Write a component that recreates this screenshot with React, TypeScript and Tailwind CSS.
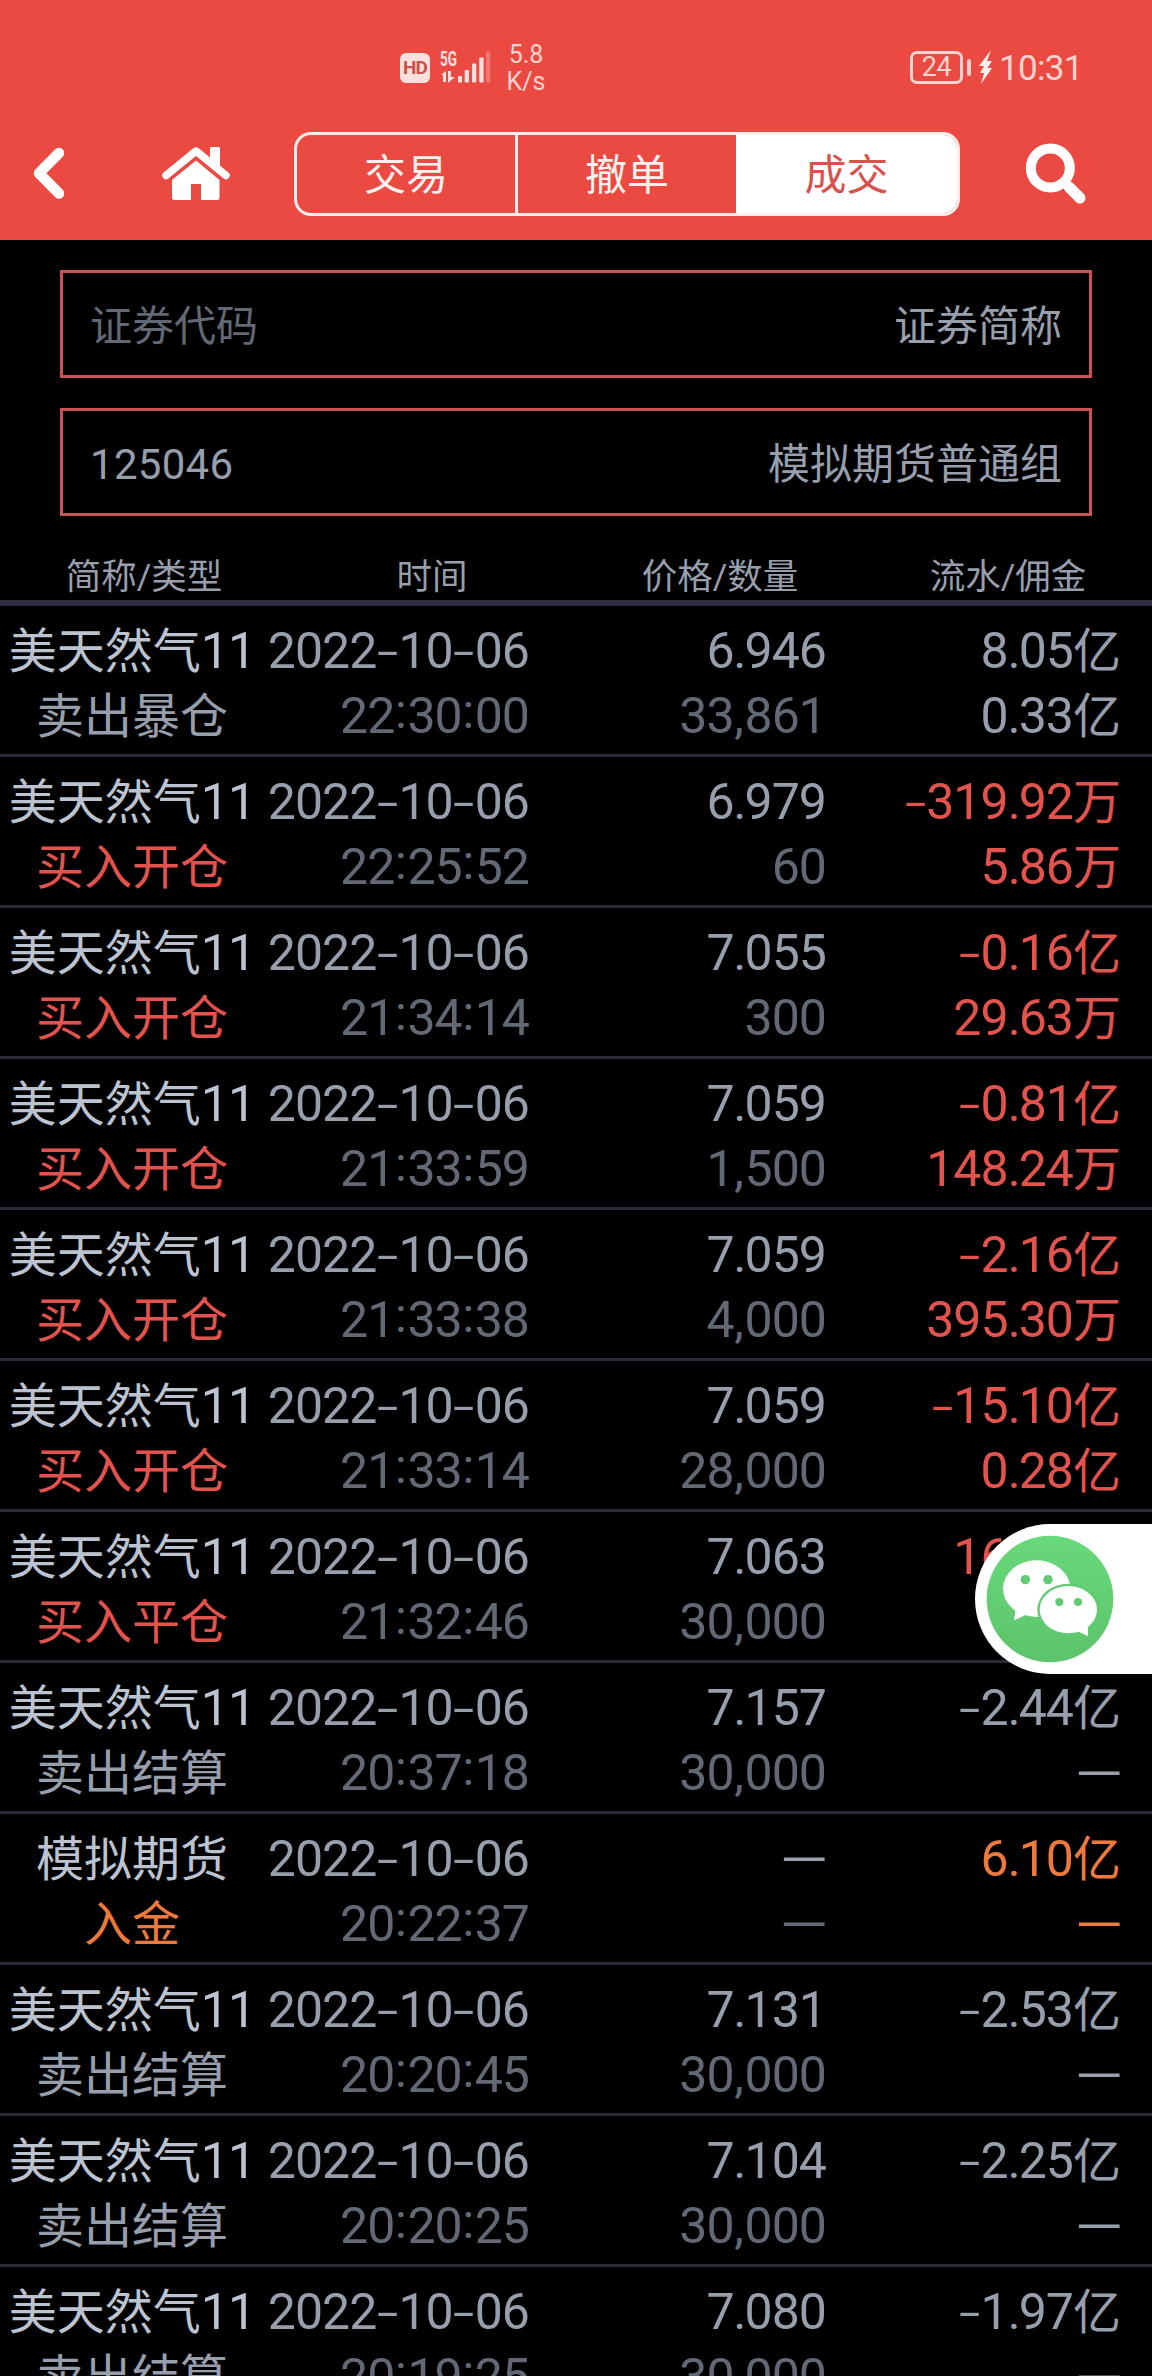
import clsx from 'clsx';

type Tone = 'muted' | 'normal' | 'red' | 'orange';

interface Trade {
  name: string;
  type: string;
  time: string;
  price: string;
  amount: string;
  flow: string;
  fee: string;
  typeTone: Tone;
  flowTone: Tone;
}

const toneClasses: Record<Tone, string> = {
  muted: 'text-[#626975]',
  normal: 'text-[#979eac]',
  red: 'text-[#e2534e]',
  orange: 'text-[#ec7a3f]',
};

const GAS = '美天然气11';

const trades: Trade[] = [
  { name: GAS, type: '卖出暴仓', time: '22:30:00', price: '6.946', amount: '33,861', flow: '8.05亿', fee: '0.33亿', typeTone: 'normal', flowTone: 'normal' },
  { name: GAS, type: '买入开仓', time: '22:25:52', price: '6.979', amount: '60', flow: '-319.92万', fee: '5.86万', typeTone: 'red', flowTone: 'red' },
  { name: GAS, type: '买入开仓', time: '21:34:14', price: '7.055', amount: '300', flow: '-0.16亿', fee: '29.63万', typeTone: 'red', flowTone: 'red' },
  { name: GAS, type: '买入开仓', time: '21:33:59', price: '7.059', amount: '1,500', flow: '-0.81亿', fee: '148.24万', typeTone: 'red', flowTone: 'red' },
  { name: GAS, type: '买入开仓', time: '21:33:38', price: '7.059', amount: '4,000', flow: '-2.16亿', fee: '395.30万', typeTone: 'red', flowTone: 'red' },
  { name: GAS, type: '买入开仓', time: '21:33:14', price: '7.059', amount: '28,000', flow: '-15.10亿', fee: '0.28亿', typeTone: 'red', flowTone: 'red' },
  { name: GAS, type: '买入平仓', time: '21:32:46', price: '7.063', amount: '30,000', flow: '16.10亿', fee: '—', typeTone: 'red', flowTone: 'red' },
  { name: GAS, type: '卖出结算', time: '20:37:18', price: '7.157', amount: '30,000', flow: '-2.44亿', fee: '—', typeTone: 'normal', flowTone: 'normal' },
  { name: '模拟期货', type: '入金', time: '20:22:37', price: '—', amount: '—', flow: '6.10亿', fee: '—', typeTone: 'orange', flowTone: 'orange' },
  { name: GAS, type: '卖出结算', time: '20:20:45', price: '7.131', amount: '30,000', flow: '-2.53亿', fee: '—', typeTone: 'normal', flowTone: 'normal' },
  { name: GAS, type: '卖出结算', time: '20:20:25', price: '7.104', amount: '30,000', flow: '-2.25亿', fee: '—', typeTone: 'normal', flowTone: 'normal' },
  { name: GAS, type: '卖出结算', time: '20:19:25', price: '7.080', amount: '30,000', flow: '-1.97亿', fee: '—', typeTone: 'normal', flowTone: 'normal' },
];

const tabs = ['交易', '撤单', '成交'];
const columns = ['简称/类型', '时间', '价格/数量', '流水/佣金'];

// Digits sit in a slightly taller face than the Chinese text around them
function Value({ text }: { text: string }) {
  const parts = text.split(/([0-9]+|[-:.,—])/).filter(Boolean);

  return (
    <>
      {parts.map((part, i) => {
        if (part === '-') {
          return (
            <span key={i} className="inline-block w-[22px] text-center">
              <span className="inline-block scale-x-[1.6] scale-y-90">-</span>
            </span>
          );
        }
        if (part === ':') {
          return (
            <span key={i} className="relative -top-[5px] inline-block w-[13px] text-center">
              :
            </span>
          );
        }
        if (part === '.' || part === ',') {
          return (
            <span key={i} className="inline-block w-[11px] text-center">
              {part}
            </span>
          );
        }
        if (part === '—') {
          return (
            <span key={i} className="inline-block w-[45px] text-center">
              <span className="inline-block scale-x-[1.3]">—</span>
            </span>
          );
        }
        return (
          <span key={i} className={/[0-9]/.test(part) ? 'text-[50px] tracking-[-0.95px]' : undefined}>
            {part}
          </span>
        );
      })}
    </>
  );
}

function StatusBar() {
  return (
    <div className="flex h-[120px] items-start pt-[40px] text-[#fdd3cf]">
      <div className="mt-[13px] ml-[400px] flex h-[30px] w-[30px] items-center justify-center rounded-[6px] bg-[#fde0de] text-[19px] font-bold tracking-[-1px] text-[#c9504b]">
        HD
      </div>
      <svg className="mt-[10px] ml-[10px] h-[34px] w-[52px]" viewBox="0 0 52 34" fill="#fde0de">
        <text x="0" y="15.500" fontSize="20" fontWeight="700" textLength="17" lengthAdjust="spacingAndGlyphs">
          5G
        </text>
        <path d="M1 25l5-4v11H3v-7zM8 21h3v6h4l-7 6z" />
        <rect x="18" y="26" width="4" height="6.500" rx="1" />
        <rect x="24.700" y="20" width="4.300" height="12.500" rx="1" />
        <rect x="32" y="13.500" width="4.300" height="19" rx="1" />
        <rect x="39.300" y="7.500" width="4.300" height="25" rx="1" />
        <rect x="46" y="1.500" width="4.300" height="31" rx="1" opacity=".3" />
      </svg>
      <div className="mt-px ml-[8px] w-[52px] text-center text-[25px] leading-[27px]">
        <div>5.8</div>
        <div>K/s</div>
      </div>
      <div className="mt-[11px] ml-[358px] flex h-[33px] w-[53px] items-center justify-center rounded-[7px] border-[3.500px] border-current text-[27px] tracking-[-0.5px]">
        24
      </div>
      <div className="mt-[19px] ml-[4px] h-[17px] w-[4px] rounded-[2px] bg-current" />
      <svg className="mt-[10px] ml-[7px] h-[34px] w-[15px]" viewBox="0 0 15 34" fill="#fff0ee">
        <path d="M13 0L1 16h5l-4 7h4L3 34 14 18H9.500l4.500-7H9z" />
      </svg>
      <div className="ml-[6px] text-[35px] leading-[58px] tracking-[-0.7px]">10:31</div>
    </div>
  );
}

function NavBar({ active }: { active: string }) {
  return (
    <div className="flex h-[120px] items-start pt-[12px]">
      <svg className="mt-[13px] ml-[30px] h-[56px] w-[38px]" viewBox="0 0 38 56" fill="none">
        <path d="M29 8L9 28.300l20 20.200" stroke="#fff" strokeWidth="10.500" strokeLinecap="round" strokeLinejoin="round" />
      </svg>
      <svg className="mt-[13px] ml-[92px] h-[58px] w-[72px]" viewBox="0 0 72 58" fill="#fff">
        <path d="M6 30.500L36 6l30 24.500" fill="none" stroke="#fff" strokeWidth="7.500" strokeLinecap="round" strokeLinejoin="round" />
        <path d="M50 3.500q0-1.500 1.500-1.500h7q1.500 0 1.500 1.500V25L50 17z" />
        <path d="M36 15.500l23.500 19.500v18q0 2-2 2H41V39H31v16H14q-2 0-2-2V35z" />
      </svg>
      <div className="ml-[62px] flex h-[84px] w-[666px] overflow-hidden rounded-[17px] border-[3px] border-white/90">
        {tabs.map((tab, i) => (
          <button
            key={tab}
            className={clsx(
              'pt-[3px] text-[42px] leading-[75px]',
              i === 0 && 'w-[218px]',
              i === 1 && 'w-[221px] border-l-[3px] border-white/90',
              i === 2 && 'w-[221px]',
              tab === active ? 'bg-white text-[#d9514c]' : 'text-[#fff1ef]'
            )}
          >
            {tab}
          </button>
        ))}
      </div>
      <svg className="mt-[10px] ml-[64px] h-[64px] w-[64px]" viewBox="0 0 64 64" fill="none" stroke="#fff">
        <circle cx="26.300" cy="26" r="19.500" strokeWidth="10" />
        <path d="M40 40l4 4" strokeWidth="9" />
        <path d="M45 45l11 11" strokeWidth="11" strokeLinecap="round" />
      </svg>
    </div>
  );
}

function Field({ left, right, placeholder }: { left: string; right: string; placeholder?: boolean }) {
  return (
    <div className="flex h-[108px] items-center justify-between border-[3px] border-[#c95553] px-[27px] pt-[5px] text-[42px] leading-[60px] text-[#979eac]">
      <span className={placeholder ? 'text-[#626975]' : 'tracking-[0.3px]'}>{left}</span>
      <span>{right}</span>
    </div>
  );
}

function TradeRow({ trade }: { trade: Trade }) {
  return (
    <div className="flex h-[151px] shrink-0 border-b-[3px] border-[#2a2d38] pt-[13px] text-[48px] leading-[65px] whitespace-nowrap text-[#979eac] [&_div]:h-[65px]">
      <section className="w-[264px] text-center">
        <div className="text-[#bcc3d0]">
          <Value text={trade.name} />
        </div>
        <div className={toneClasses[trade.typeTone]}>{trade.type}</div>
      </section>
      <section className="w-[265px] text-right">
        <div>
          <Value text="2022-10-06" />
        </div>
        <div className={toneClasses.muted}>
          <Value text={trade.time} />
        </div>
      </section>
      <section className="w-[297px] text-right">
        <div>
          <Value text={trade.price} />
        </div>
        <div className={toneClasses.muted}>
          <Value text={trade.amount} />
        </div>
      </section>
      <section className={clsx('w-[295px] text-right', toneClasses[trade.flowTone])}>
        <div>
          <Value text={trade.flow} />
        </div>
        <div>
          <Value text={trade.fee} />
        </div>
      </section>
    </div>
  );
}

function WeChatButton() {
  return (
    <button className="absolute top-[1524px] right-0 h-[150px] w-[177px] rounded-l-full bg-white pl-[11px]">
      <svg className="h-[128px] w-[128px]" viewBox="258 134 384 384">
        <defs>
          <linearGradient id="wechat" x1="0" y1="0" x2="0" y2="1">
            <stop offset="0" stopColor="#68d97b" />
            <stop offset="1" stopColor="#5cc36b" />
          </linearGradient>
        </defs>
        <circle cx="450" cy="326" r="190" fill="url(#wechat)" />
        <ellipse cx="410" cy="295" rx="101" ry="85" fill="#fff" />
        <path d="M348 350L342 390L382 372z" fill="#fff" />
        <ellipse cx="505" cy="358" rx="93" ry="78" fill="#60cb71" />
        <ellipse cx="505" cy="358" rx="86" ry="71" fill="#fff" />
        <path d="M532 422L564 438L563 400z" fill="#fff" />
        <g fill="#60cb71">
          <circle cx="376" cy="268" r="14" />
          <circle cx="444" cy="268" r="14" />
          <circle cx="478" cy="335" r="12" />
          <circle cx="534" cy="335" r="12" />
        </g>
      </svg>
    </button>
  );
}

export default function App() {
  return (
    <main className="relative flex h-[2376px] w-[1152px] flex-col overflow-hidden bg-black font-[Roboto,'Noto_Sans_CJK_SC',sans-serif]">
      <header className="h-[240px] shrink-0 bg-[#eb4a43]">
        <StatusBar />
        <NavBar active="成交" />
      </header>

      <div className="flex shrink-0 flex-col gap-[30px] px-[60px] pt-[30px]">
        <Field left="证券代码" right="证券简称" placeholder />
        <Field left="125046" right="模拟期货普通组" />
      </div>

      <div className="mt-[34px] grid h-[56px] shrink-0 grid-cols-4 border-b-[6px] border-[#2c2d40] pt-[2px] text-center text-[35.5px] leading-[50px] text-[#979eac]">
        {columns.map((column) => (
          <span key={column}>{column}</span>
        ))}
      </div>

      {trades.map((trade) => (
        <TradeRow key={trade.time} trade={trade} />
      ))}

      <WeChatButton />
    </main>
  );
}
